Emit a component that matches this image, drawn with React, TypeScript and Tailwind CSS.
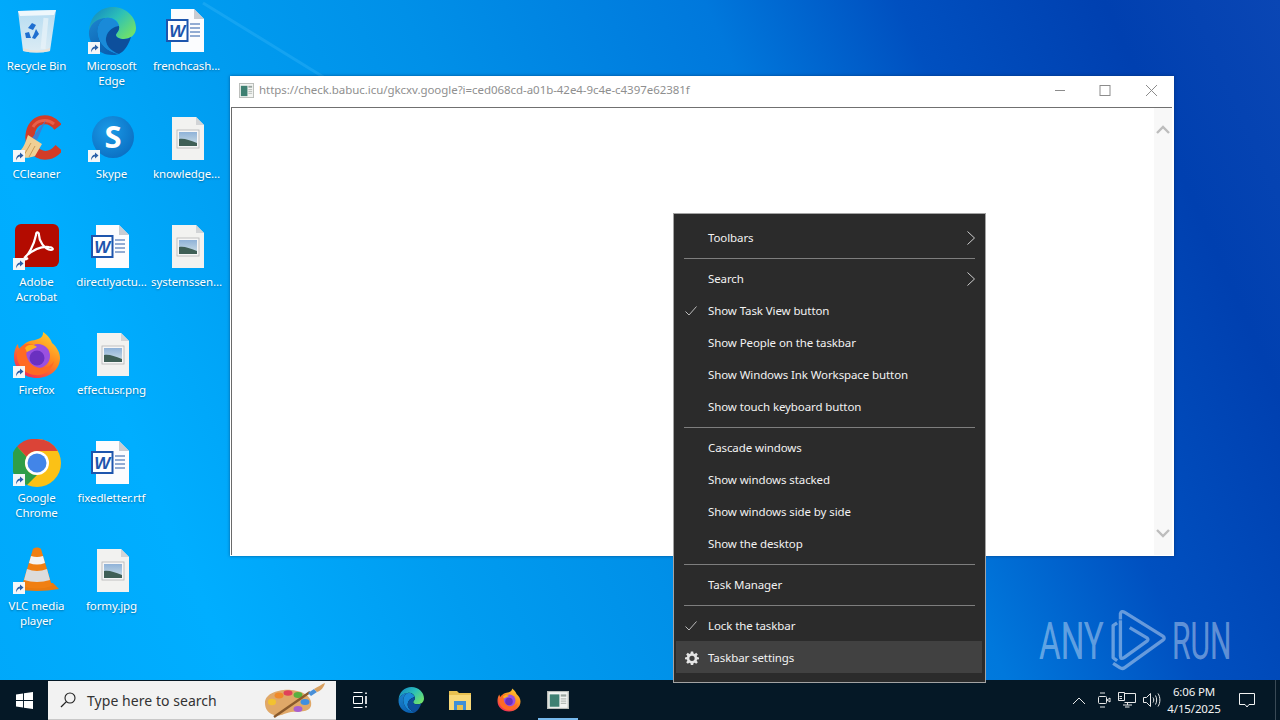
import { ReactNode } from "react";

const ui = "font-['Noto_Sans','Open_Sans',sans-serif]";

function ShortcutArrow() {
  return (
    <svg viewBox="0 0 12 12" className="absolute left-0 bottom-[1px] w-[12px] h-[12px]">
      <rect width="12" height="12" fill="#f4f6f8" />
      <path d="M3 10.5 C3 7 4.5 5 7 4.6 L7 2.5 L10.5 5.5 L7 8.5 L7 6.6 C5.4 6.8 4.2 8 3 10.5Z" fill="#2a5fa8" />
    </svg>
  );
}

function RecycleBin() {
  return (
    <svg viewBox="0 0 48 48" className="w-12 h-12">
      <defs>
        <linearGradient id="binBody" x1="0" y1="0" x2="0" y2="1">
          <stop offset="0" stopColor="#b6dcf2" />
          <stop offset="1" stopColor="#dcecf4" />
        </linearGradient>
      </defs>
      <path d="M5 4 L43 3 L37 44 Q24 47 10 44Z" fill="url(#binBody)" />
      <path d="M5 4 L43 3 L41 8 L7 9Z" fill="#eef7fc" />
      <path d="M33 11 L30 42" stroke="#eaf4fa" strokeWidth="5" opacity=".7" />
      <path d="M10 41 Q24 46 37 41 L37 44 Q24 47 10 44Z" fill="#e9e2d8" />
      <path d="M15 21 L19 16 L23 18 L20 23Z M23 22 L26 27 L22 32 L19 31 L21 27Z M12 26 L16 25 L18 31 L13 31Z" fill="#1f6fd0" />
    </svg>
  );
}

function EdgeIcon({ size = "w-12 h-12" }: { size?: string }) {
  return (
    <svg viewBox="0 0 48 48" className={size}>
      <defs>
        <linearGradient id="edgeTop" x1="0" y1="0" x2="1" y2="0.7">
          <stop offset="0" stopColor="#0f7fc4" />
          <stop offset=".55" stopColor="#2cc0b8" />
          <stop offset="1" stopColor="#6ee06c" />
        </linearGradient>
        <linearGradient id="edgeBlue" x1="0" y1="0" x2="0.6" y2="1">
          <stop offset="0" stopColor="#1c86cf" />
          <stop offset="1" stopColor="#0a5fb0" />
        </linearGradient>
      </defs>
      <path d="M1 24 C2 9 12 0 25 0 C38 0 48 10 48 21 C48 28 42 32 36 32 C31 32 28 30 28 28 C28 26 32 24 31 19 C30 13 24 10 18 11 C9 12 3 17 1 24Z" fill="url(#edgeTop)" />
      <path d="M1 24 C3 16 10 11 18 11 C12 14 9 20 10 27 C11 36 19 45 31 47 C28 48 26 48 24 48 C11 48 0 37 1 24Z" fill="url(#edgeBlue)" />
      <path d="M18 11 C23 10 29 13 31 19 C27 19 19 23 18 31 C17 37 22 44 31 47 C19 45 11 36 10 27 C9 20 12 14 18 11Z" fill="#1a8ad8" />
      <path d="M31 19 C32 24 28 26 28 28 C28 30 31 32 36 32 C39 32 41 31 43 30 C40 40 35 45 31 47 C22 44 17 37 18 31 C19 23 27 19 31 19Z" fill="#0d4f9c" />
    </svg>
  );
}

function WordDoc() {
  return (
    <svg viewBox="0 0 48 48" className="w-12 h-12">
      <path d="M8 2 L31 2 L41 12 L41 45 L8 45Z" fill="#fbfcfe" />
      <path d="M31 2 L41 12 L31 12Z" fill="#c8ccd2" />
      <path d="M27 17 H37 M27 21 H37 M27 25 H37 M27 29 H37" stroke="#2a5ca8" strokeWidth="1" />
      <rect x="4" y="13" width="20.5" height="21" fill="#fff" stroke="#1d55ad" strokeWidth="2" />
      <text x="14.2" y="30" textAnchor="middle" fontSize="17" fontWeight="700" fontStyle="italic" fill="#1d55ad" fontFamily="Liberation Sans, sans-serif">W</text>
    </svg>
  );
}

function ImageDoc() {
  return (
    <svg viewBox="0 0 48 48" className="w-12 h-12">
      <defs>
        <linearGradient id="sky" x1="0" y1="0" x2="0" y2="1">
          <stop offset="0" stopColor="#8fb2d8" />
          <stop offset="1" stopColor="#cfe0e6" />
        </linearGradient>
      </defs>
      <path d="M9 2 L33 2 L41 10 L41 45 L9 45Z" fill="#f2f2f0" />
      <path d="M33 2 L41 10 L33 10Z" fill="#d2d4d6" />
      <rect x="14" y="15" width="22" height="18" fill="#f6f6f6" stroke="#b4b4b4" strokeWidth=".8" />
      <rect x="16" y="17" width="18" height="14" fill="url(#sky)" />
      <path d="M16 24 C21 23 26 25 34 28 L34 31 L16 31Z" fill="#3f5f56" />
    </svg>
  );
}

function CCleaner() {
  return (
    <svg viewBox="0 0 48 48" className="w-12 h-12">
      <path d="M45 12 C36 0 19 3 17 20 C15 36 32 49 46 33" fill="none" stroke="#d23c28" strokeWidth="9" />
      <path d="M41 9 C34 3 24 5 20 12" fill="none" stroke="#e8604a" strokeWidth="3" />
      <path d="M33 5 L24 25 L19 23Z" fill="#3f7fd0" />
      <path d="M15 20 L29 29 L22 41 C14 44 7 43 2 39 C9 37 12 29 15 20Z" fill="#f0cf94" />
      <path d="M18 28 L11 40 M22 31 L16 42" stroke="#c89a58" strokeWidth="1" />
    </svg>
  );
}

function SkypeIcon() {
  return (
    <svg viewBox="0 0 48 48" className="w-12 h-12">
      <defs>
        <radialGradient id="sky2" cx=".4" cy=".35" r=".75">
          <stop offset="0" stopColor="#1a9be8" />
          <stop offset="1" stopColor="#0a6cc0" />
        </radialGradient>
      </defs>
      <circle cx="25" cy="22" r="21" fill="url(#sky2)" />
      <text x="25" y="33" textAnchor="middle" fontSize="31" fontWeight="700" fill="#fff" fontFamily="Open Sans, sans-serif">S</text>
    </svg>
  );
}

function AcrobatIcon() {
  return (
    <svg viewBox="0 0 48 48" className="w-12 h-12">
      <rect x="2" y="1" width="44" height="43" rx="6" fill="#b30b00" />
      <path d="M11 35 C15 33 21 22 23 12 C23 8 26 9 26 12 C26 18 31 26 38 27 C41 27 40 24 36 24 C28 23 20 27 13 33 C10 36 11 38 15 35" fill="none" stroke="#fff" strokeWidth="2.2" />
    </svg>
  );
}

function FirefoxIcon({ size = "w-12 h-12" }: { size?: string }) {
  return (
    <svg viewBox="0 0 48 48" className={size}>
      <defs>
        <linearGradient id="ffBody" x1="0.8" y1="0" x2="0.2" y2="1">
          <stop offset="0" stopColor="#ffcf30" />
          <stop offset=".45" stopColor="#ff8a1f" />
          <stop offset="1" stopColor="#f0245c" />
        </linearGradient>
      </defs>
      <path d="M30 1 C36 5 38 9 39 12 C44 16 47 22 47 27 C47 38 37 47 24 47 C11 47 1 38 1 26 C1 22 2 16 5 13 C5 16 6 18 8 19 C9 14 13 11 17 10 C22 9 31 8 30 1Z" fill="url(#ffBody)" />
      <circle cx="25" cy="25" r="12" fill="#9a50e0" />
      <circle cx="24" cy="27" r="7.5" fill="#6a30c0" />
      <path d="M4 22 C8 12 16 11 22 15 C16 15 13 18 13 20 C13 28 18 36 27 37 C33 38 39 34 41 30 C39 40 30 45 22 44 C11 43 3 33 4 22Z" fill="#ff6a24" />
      <path d="M12 17 C15 13 20 13 24 16 L14 21Z" fill="#ffb01f" />
    </svg>
  );
}

function ChromeIcon() {
  return (
    <svg viewBox="0 0 48 48" className="w-12 h-12">
      <circle cx="24" cy="24" r="24" fill="#fbc116" />
      <path d="M24 0 A24 24 0 0 1 44.8 12 L24 12 A12 12 0 0 0 13.6 18 L4 7.5 A24 24 0 0 1 24 0Z" fill="#db4437" />
      <path d="M4 7.5 L13.6 18 A12 12 0 0 0 24 36 L14 46 A24 24 0 0 1 4 7.5Z" fill="#2f9e48" />
      <circle cx="24" cy="24" r="12" fill="#fff" />
      <circle cx="24" cy="24" r="9.5" fill="#4285e8" />
    </svg>
  );
}

function VlcIcon() {
  return (
    <svg viewBox="0 0 48 48" className="w-12 h-12">
      <path d="M2 42 L8 36 H40 L46 42 Q24 46 2 42Z" fill="#e87a10" />
      <path d="M20 2 C22 0 26 0 28 2 L39 39 Q24 44 9 39Z" fill="#f07f12" />
      <path d="M18 9 Q24 11 30 9 L32 16 Q24 19 16 16Z" fill="#f4f4f4" />
      <path d="M14 22 Q24 26 34 22 L37 33 Q24 37 11 33Z" fill="#dcdcdc" />
    </svg>
  );
}

type DesktopItem = { label: ReactNode; icon: ReactNode; shortcut?: boolean };

const desktopItems: DesktopItem[] = [
  { label: "Recycle Bin", icon: <RecycleBin /> },
  { label: "CCleaner", icon: <CCleaner />, shortcut: true },
  { label: "Adobe Acrobat", icon: <AcrobatIcon />, shortcut: true },
  { label: "Firefox", icon: <FirefoxIcon />, shortcut: true },
  { label: "Google Chrome", icon: <ChromeIcon />, shortcut: true },
  { label: "VLC media player", icon: <VlcIcon />, shortcut: true },
  { label: "Microsoft Edge", icon: <EdgeIcon />, shortcut: true },
  { label: "Skype", icon: <SkypeIcon />, shortcut: true },
  { label: "directlyactu...", icon: <WordDoc /> },
  { label: "effectusr.png", icon: <ImageDoc /> },
  { label: "fixedletter.rtf", icon: <WordDoc /> },
  { label: "formy.jpg", icon: <ImageDoc /> },
  { label: "frenchcash...", icon: <WordDoc /> },
  { label: "knowledge...", icon: <ImageDoc /> },
  { label: "systemssen...", icon: <ImageDoc /> },
];

function DesktopIcon({ item }: { item: DesktopItem }) {
  return (
    <div className="w-[75px] h-[108px] flex flex-col items-center pt-[7px]">
      <div className="relative w-12 h-12">
        {item.icon}
        {item.shortcut && <ShortcutArrow />}
      </div>
      <div className="mt-[3px] w-[75px] text-center text-white text-[11.5px] tracking-[-0.1px] leading-[15px] [text-shadow:0_1px_2px_rgba(0,0,0,0.35)]">
        {item.label}
      </div>
    </div>
  );
}

function AppWindow() {
  return (
    <svg viewBox="0 0 16 16" preserveAspectRatio="none" className="w-full h-full">
      <rect x=".5" y=".5" width="15" height="15" fill="#f2f4f2" stroke="#b8bcb8" />
      <rect x="2" y="3" width="7" height="11" fill="#3e8072" />
      <rect x="10" y="3" width="4" height="2" fill="#9aa5a0" />
      <path d="M10 7 H14 M10 9 H14 M10 11 H14" stroke="#b6bcb8" />
    </svg>
  );
}

function BrowserWindow() {
  return (
    <div className="absolute left-[230px] top-[76px] w-[944px] h-[480px] bg-white flex flex-col shadow-[0_0_3px_rgba(0,40,90,0.6)]">
      <div className="h-[31px] flex items-center pl-[9px] shrink-0">
        <div className="w-[15px] h-[15px] mb-[2px]"><AppWindow /></div>
        <span className="ml-[5px] mb-[3px] text-[11.5px] text-[#8f8f8f] tracking-[-0.05px]">https://check.babuc.icu/gkcxv.google?i=ced068cd-a01b-42e4-9c4e-c4397e62381f</span>
        <div className="ml-auto mb-[4px] flex items-center text-[#8c8c8c]">
          <svg viewBox="0 0 46 12" className="w-[46px] h-[12px]"><path d="M19 6.5 H29" stroke="currentColor" /></svg>
          <svg viewBox="0 0 46 12" className="w-[46px] h-[12px]"><rect x="18" y="1.5" width="10" height="10" fill="none" stroke="currentColor" /></svg>
          <svg viewBox="0 0 46 12" className="w-[46px] h-[12px]"><path d="M18 1 L29 12 M29 1 L18 12" stroke="currentColor" /></svg>
        </div>
      </div>
      <div className="flex-1 ml-[1px] mr-[2px] mb-[1px] flex border-l border-t border-[#6a6a6a] border-t-[#707070]">
        <div className="flex-1" />
        <div className="w-[18px] bg-[#f8f8f8] flex flex-col justify-between items-center pt-[17px] pb-[17px]">
          <svg viewBox="0 0 14 9" className="w-[14px] h-[9px]"><path d="M1 8 L7 2 L13 8" fill="none" stroke="#bdbdbd" strokeWidth="2.4" /></svg>
          <svg viewBox="0 0 14 9" className="w-[14px] h-[9px]"><path d="M1 1 L7 7 L13 1" fill="none" stroke="#bdbdbd" strokeWidth="2.4" /></svg>
        </div>
      </div>
    </div>
  );
}

function Chevron() {
  return (
    <svg viewBox="0 0 8 14" className="w-[8px] h-[14px] absolute right-[7px] top-[10px]">
      <path d="M.5 .5 L7.5 7 L.5 13.5" fill="none" stroke="#cfcfcf" />
    </svg>
  );
}

function Check() {
  return (
    <svg viewBox="0 0 12 10" className="w-[12px] h-[10px] absolute left-[9px] top-[12px]">
      <path d="M.5 5.5 L4 9 L11.5 .5" fill="none" stroke="#bdbdbd" />
    </svg>
  );
}

function Gear() {
  return (
    <svg viewBox="0 0 24 24" className="w-[14px] h-[14px] absolute left-[9px] top-[10px]">
      <path
        fill="#e4e4e4"
        fillRule="evenodd"
        d="M10 1h4l.6 3.2 1.9.8L19.2 3 22 5.8 20 8.5l.8 1.9L24 11v3l-3.2.6-.8 1.9 2 2.7-2.8 2.8-2.7-2-1.9.8L14 24h-4l-.6-3.2-1.9-.8L4.8 22 2 19.2l2-2.7-.8-1.9L0 14v-3l3.2-.6.8-1.9-2-2.7L4.8 3l2.7 2 1.9-.8zM12 8a4.5 4.5 0 1 0 0 9 4.5 4.5 0 0 0 0-9z"
      />
    </svg>
  );
}

type MenuEntry = { label: string; arrow?: boolean; check?: boolean; gear?: boolean; active?: boolean } | "sep";

const menu: MenuEntry[] = [
  { label: "Toolbars", arrow: true },
  "sep",
  { label: "Search", arrow: true },
  { label: "Show Task View button", check: true },
  { label: "Show People on the taskbar" },
  { label: "Show Windows Ink Workspace button" },
  { label: "Show touch keyboard button" },
  "sep",
  { label: "Cascade windows" },
  { label: "Show windows stacked" },
  { label: "Show windows side by side" },
  { label: "Show the desktop" },
  "sep",
  { label: "Task Manager" },
  "sep",
  { label: "Lock the taskbar", check: true },
  { label: "Taskbar settings", gear: true, active: true },
];

function ContextMenu() {
  return (
    <div className="absolute left-[673px] top-[213px] w-[313px] h-[470px] bg-[#2b2b2b] border border-[#a3a3a3] pt-[7px] pb-[9px] pl-[2px] pr-[3px] flex flex-col text-[11.5px] tracking-[-0.1px] text-[#f2f2f2]">
      {menu.map((entry, i) =>
        entry === "sep" ? (
          <div key={i} className="h-[9px] pt-[5px] pl-[8px] pr-[7px]">
            <div className="h-px bg-[#7e7e7e]" />
          </div>
        ) : (
          <div key={i} className={`relative h-8 shrink-0 flex items-center pl-[32px] pt-[2px] ${entry.active ? "bg-[#414141]" : ""}`}>
            {entry.check && <Check />}
            {entry.gear && <Gear />}
            {entry.label}
            {entry.arrow && <Chevron />}
          </div>
        )
      )}
    </div>
  );
}

function Palette() {
  return (
    <svg viewBox="0 0 62 36" className="w-[62px] h-[36px]">
      <path d="M1 21 C1 12 14 7 27 8 C41 9 49 16 47 24 C45 31 34 29 27 30 C20 31 17 35 10 33 C4 31 1 27 1 21Z" fill="#e0a868" />
      <ellipse cx="8" cy="20" rx="4" ry="3.2" fill="#f2c230" />
      <ellipse cx="15" cy="13.5" rx="4.5" ry="3" fill="#ef8a2a" />
      <ellipse cx="24" cy="11" rx="4.5" ry="2.8" fill="#e0405a" />
      <ellipse cx="34" cy="13" rx="4.5" ry="3" fill="#58b040" />
      <ellipse cx="41" cy="20" rx="4.5" ry="3" fill="#3f8fe0" />
      <ellipse cx="34" cy="27" rx="4.5" ry="3" fill="#a860d0" />
      <path d="M10 35 L46 10" stroke="#8a5a2c" strokeWidth="2.4" />
      <path d="M44 11 L50 7 L53 10 L47 14Z" fill="#4a90d8" />
      <path d="M50 7 C54 5 58 2 61 1 C60 5 57 9 53 10Z" fill="#d8a060" />
    </svg>
  );
}

function FolderIcon() {
  return (
    <svg viewBox="0 0 24 22" className="w-[24px] h-[22px]">
      <path d="M1 2 H9 L11 4 H23 V20 H1Z" fill="#e8c050" />
      <rect x="1" y="6" width="22" height="15" fill="#f8d878" />
      <rect x="6" y="12" width="12" height="9" fill="#3f8fd8" />
      <rect x="9" y="16" width="6" height="5" fill="#e8c050" />
    </svg>
  );
}

function Taskbar() {
  return (
    <div className="h-10 shrink-0 bg-[#051826] flex items-stretch text-white relative">
      <div className="w-12 flex items-center justify-center">
        <svg viewBox="0 0 18 18" className="w-[17px] h-[17px]">
          <path d="M0 2.6 L7.4 1.5 V8.5 H0Z M8.4 1.4 L18 0 V8.5 H8.4Z M0 9.5 H7.4 V16.5 L0 15.4Z M8.4 9.5 H18 V18 L8.4 16.6Z" fill="#fff" />
        </svg>
      </div>
      <div className="w-[288px] mt-[1px] bg-[#f2f2f2] flex items-center pl-[12px] pr-[10px] border-b border-[#c8c8c8]">
        <svg viewBox="0 0 16 16" className="w-[16px] h-[16px]">
          <circle cx="10" cy="6" r="5" fill="none" stroke="#222" strokeWidth="1.1" />
          <path d="M6.4 9.6 L1 15" stroke="#222" strokeWidth="1.3" />
        </svg>
        <span className="ml-[11px] text-[14px] text-[#333] tracking-[0.05px]">Type here to search</span>
        <div className="ml-auto"><Palette /></div>
      </div>
      <div className="w-12 flex items-center justify-center">
        <svg viewBox="0 0 16 16" className="w-[16px] h-[16px]">
          <path d="M1.5 .5 H10.5 M1.5 15.5 H10.5 M1.5 4.5 H10.5 V11.5 H1.5Z" fill="none" stroke="#fff" />
          <path d="M14 .5 V2 M14 4 V12 M14 14 V15.5" stroke="#fff" strokeWidth="1.6" />
        </svg>
      </div>
      <div className="w-[50px] ml-[2px] flex items-center justify-center"><EdgeIcon size="w-[26px] h-[26px]" /></div>
      <div className="w-[48px] flex items-center justify-center"><FolderIcon /></div>
      <div className="w-[50px] flex items-center justify-center"><FirefoxIcon size="w-[24px] h-[24px]" /></div>
      <div className="w-[48px] flex items-center justify-center relative">
        <div className="w-[22px] h-[18px]"><AppWindow /></div>
        <div className="absolute left-[4px] right-[4px] bottom-0 h-[2px] bg-[#76b9ed]" />
      </div>
      <div className="ml-auto flex items-center">
        <svg viewBox="0 0 24 12" className="w-[24px] h-[12px]"><path d="M6 10 L12 4 L18 10" fill="none" stroke="#e8e8e8" /></svg>
        <svg viewBox="0 0 24 16" className="w-[24px] h-[16px]">
          <path d="M9 1 H14 M9 15 H14" stroke="#e8e8e8" />
          <rect x="7.5" y="4.5" width="8" height="7" rx="1" fill="none" stroke="#e8e8e8" />
          <path d="M16 8 L19 6 V10Z" fill="none" stroke="#e8e8e8" />
        </svg>
        <svg viewBox="0 0 24 16" className="w-[24px] h-[16px]">
          <path d="M9.5 1.5 H20.5 V10.5 H9.5 M4.5 4.5 H7 M4.5 6.5 H7 M3.5 .5 H9.5 V8.5 H3.5Z M8 13 H17 M12.5 10.5 V13 M14.5 15 H10" fill="none" stroke="#e8e8e8" />
        </svg>
        <svg viewBox="0 0 24 16" className="w-[24px] h-[16px]">
          <path d="M4.5 5.5 H7.5 L11.5 1.5 V14.5 L7.5 10.5 H4.5Z M14 5.5 C15 7 15 9 14 10.5 M16.5 3.5 C18 6 18 10 16.5 12.5 M19 1.5 C21.5 5 21.5 11 19 14.5" fill="none" stroke="#e8e8e8" />
        </svg>
        <div className="w-[58px] ml-[2px] mr-[1px] text-center text-[11.5px] tracking-[-0.15px] leading-[17px] text-[#f2f2f2]">
          <div>6:06 PM</div>
          <div>4/15/2025</div>
        </div>
        <div className="w-[46px] mr-[5px] flex items-center justify-center">
          <svg viewBox="0 0 16 16" className="w-[16px] h-[16px]">
            <path d="M.5 1.5 H15.5 V12.5 H10 L8 15 L6 12.5 H.5Z" fill="none" stroke="#f2f2f2" />
          </svg>
        </div>
        <div className="w-[5px] h-full border-l border-[#3a4a56]" />
      </div>
    </div>
  );
}

function Watermark() {
  return (
    <div className="absolute left-[1036px] top-[608px] w-[200px] h-[64px] text-white/40 font-['Roboto',sans-serif] font-normal text-[51px] leading-none">
      <span className="absolute left-[3px] top-[8px] inline-block origin-left scale-x-[0.65]">ANY</span>
      <svg viewBox="235 25 180 190" className="absolute left-[72px] top-0 w-[60px] h-[63px]" fill="none" stroke="rgba(255,255,255,0.4)" strokeWidth="10" strokeLinejoin="round">
        <path d="M262 70 L250 78 V175 L262 184" />
        <path d="M272 60 L272 42 Q275 32 285 38 L400 110 Q408 116 400 122 L285 205 Q278 210 270 205 L250 192" />
        <path d="M272 62 V170 Q272 182 284 174 L352 125 Q358 120 352 115 L300 84" />
      </svg>
      <span className="absolute left-[136px] top-[8px] inline-block origin-left scale-x-[0.59]">RUN</span>
    </div>
  );
}

export default function App() {
  return (
    <div className={`relative w-[1280px] h-[720px] overflow-hidden flex flex-col ${ui} bg-[linear-gradient(66deg,#00a8fa_0%,#00aeff_16%,#009cf0_32%,#0090e8_45%,#0078dc_64%,#0050c0_76%,#0040b0_89%,#0a46b4_100%)]`}>
      <div className="flex-1 relative">
        <svg viewBox="0 0 1280 680" className="absolute inset-0 w-full h-full">
          <path d="M203 3 L325 78" stroke="#5ccaff" strokeWidth="3" opacity=".22" />
        </svg>
        <div className="relative -ml-px grid grid-flow-col grid-rows-6 auto-cols-[75px] justify-start">
          {desktopItems.map((item, i) => (
            <DesktopIcon key={i} item={item} />
          ))}
        </div>
        <BrowserWindow />
        <Watermark />
      </div>
      <Taskbar />
      <ContextMenu />
    </div>
  );
}
